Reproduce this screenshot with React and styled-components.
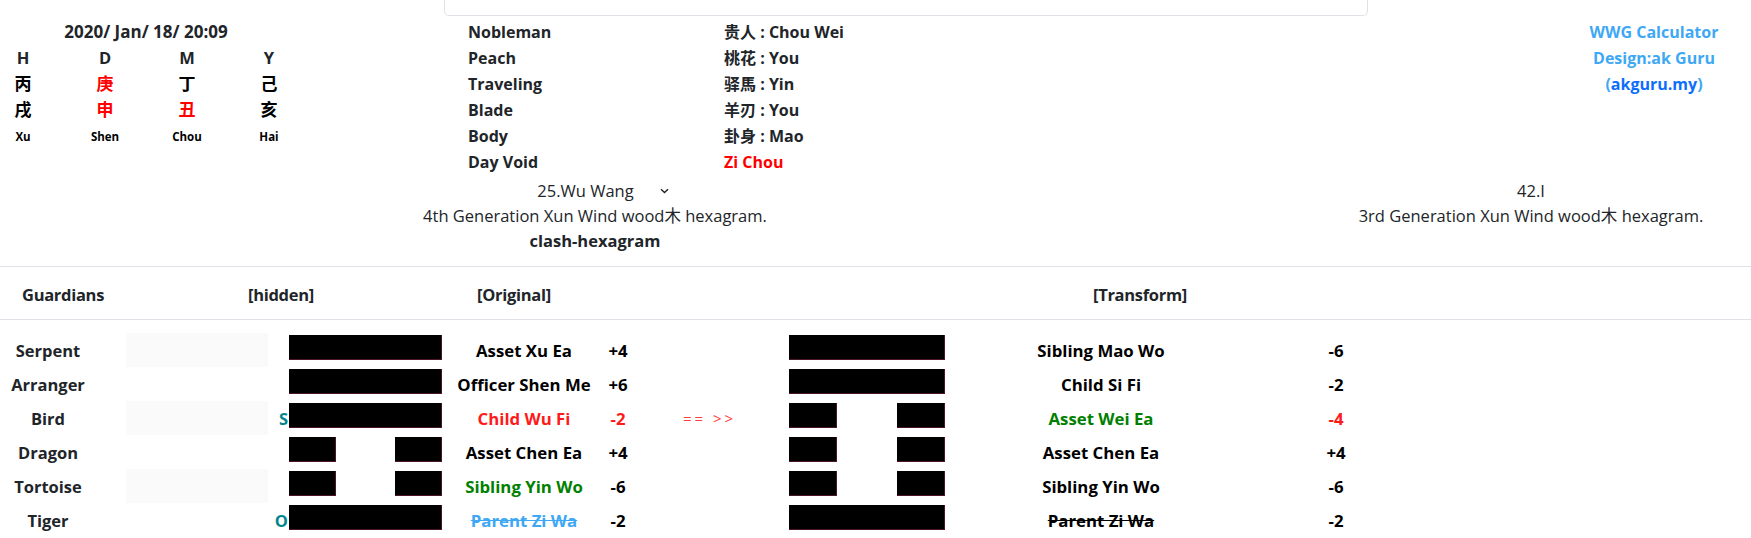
import React from "react";
import styled, { createGlobalStyle } from "styled-components";

const GlobalStyle = createGlobalStyle`
  body {
    margin: 0;
    background: #fff;
    color: #212529;
    font-family: "Open Sans", "Noto Sans CJK SC", sans-serif;
  }
  * {
    box-sizing: border-box;
  }
`;

const Page = styled.div`
  width: 1751px;
`;

const Top = styled.div`
  display: flex;
  align-items: flex-start;
`;

const ChartPanel = styled.div`
  width: 444px;
  padding-top: 19px;
`;

const DateLine = styled.div`
  width: 292px;
  text-align: center;
  font-size: 17px;
  font-weight: 700;
  line-height: 26px;
`;

const PillarGrid = styled.div`
  display: grid;
  grid-template-columns: repeat(4, 46px);
  column-gap: 36px;
  justify-items: center;
`;

const PillarCell = styled.div`
  font-size: ${(p) => p.$size || 16.5}px;
  font-weight: 700;
  line-height: ${(p) => p.$lh || 26}px;
  color: ${(p) => (p.$red ? "#ff0000" : p.$black ? "#000" : "#212529")};
`;

const InfoPanel = styled.div`
  width: 924px;
`;

const CardEdge = styled.div`
  height: 16px;
  border: 1px solid #dee2e6;
  border-top: none;
  border-radius: 0 0 5px 5px;
  margin-bottom: 3px;
`;

const StarGrid = styled.div`
  display: grid;
  grid-template-columns: 256px auto;
  padding-left: 24px;
`;

const StarCell = styled.div`
  font-size: 16px;
  font-weight: 700;
  line-height: 26px;
  color: ${(p) => (p.$red ? "#ff0000" : "#212529")};
`;

const CreditPanel = styled.div`
  flex: 1;
  padding: 19px 0 0 189px;
  text-align: center;
  font-size: 16px;
  font-weight: 700;
  line-height: 26px;
  color: #3ea8f4;
`;

const SiteLink = styled.a`
  color: #0d6efd;
  text-decoration: none;
`;

const HexInfoRow = styled.div`
  display: flex;
  margin-top: 3px;
  padding-bottom: 13px;
  border-bottom: 1px solid #dee2e6;
`;

const HexInfo = styled.div`
  width: ${(p) => p.$width}px;
  margin-left: ${(p) => (p.$right ? "auto" : "0")};
  text-align: center;
  font-size: 16.5px;
  line-height: 25px;
  color: #212529;
`;

const SelectBox = styled.span`
  display: inline-flex;
  align-items: center;
  gap: 26px;
  padding-left: 16px;
`;

const ClashTag = styled.div`
  font-weight: 700;
`;

const TableHead = styled.div`
  display: flex;
  height: 53px;
  align-items: center;
  border-bottom: 1px solid #dee2e6;
  font-size: 16.5px;
  font-weight: 700;
  letter-spacing: -0.3px;
  color: #212529;
`;

const HeadCell = styled.div`
  width: ${(p) => p.$width}px;
  padding-left: ${(p) => p.$pad || 0}px;
  padding-top: 2px;
`;

const TableBody = styled.div`
  padding-top: 13px;
`;

const LineRow = styled.div`
  display: grid;
  grid-template-columns: 96px 30px 142px 21px 153px 164px 24px 159px 156px 312px 158px;
  height: 34px;
  align-items: center;
  font-size: 16.8px;
  font-weight: 700;
  color: #000;
`;

const Centered = styled.div`
  text-align: center;
  white-space: nowrap;
  color: ${(p) => p.$color || "#000"};
  text-decoration: ${(p) => (p.$strike ? "line-through" : "none")};
`;

const GuardianName = styled(Centered)`
  color: #212529;
  font-size: 16.5px;
`;

const HiddenCell = styled.div`
  height: 34px;
  background: ${(p) => (p.$stripe ? "#fafafa" : "transparent")};
`;

const MarkCell = styled.div`
  text-align: right;
  color: #00868b;
  font-size: 16.5px;
  padding-right: 1px;
`;

const BarSlot = styled.div`
  align-self: start;
  margin-top: 2px;
  height: 25px;
  display: flex;
  justify-content: space-between;
`;

const Bar = styled.div`
  width: ${(p) => p.$w};
  height: 25px;
  background: #000;
  border-right: 1px solid #4a1628;
  border-bottom: 1px solid #4a1628;
`;

const Arrow = styled.div`
  text-align: center;
  color: #ff4040;
  font-size: 15px;
  font-weight: 400;
  letter-spacing: 3px;
`;

const Chevron = () => (
  <svg width="9" height="6" viewBox="0 0 9 6">
    <path d="M1 1.2 L4.5 4.6 L8 1.2" fill="none" stroke="#212529" strokeWidth="1.4" />
  </svg>
);

const Line = ({ yang }) => (
  <BarSlot>
    {yang ? (
      <Bar $w="100%" />
    ) : (
      <>
        <Bar $w="31%" />
        <Bar $w="31%" />
      </>
    )}
  </BarSlot>
);

const pillars = [
  { head: "H", stem: "丙", branch: "戌", py: "Xu" },
  { head: "D", stem: "庚", branch: "申", py: "Shen", stemRed: true, branchRed: true },
  { head: "M", stem: "丁", branch: "丑", py: "Chou", branchRed: true },
  { head: "Y", stem: "己", branch: "亥", py: "Hai" },
];

const stars = [
  ["Nobleman", "贵人 : Chou Wei"],
  ["Peach", "桃花 : You"],
  ["Traveling", "驿馬 : Yin"],
  ["Blade", "羊刃 : You"],
  ["Body", "卦身 : Mao"],
  ["Day Void", "Zi Chou", true],
];

const RED = "#ff1a1a";
const GREEN = "#008000";
const SKY = "#3ea8f4";

const rows = [
  {
    guardian: "Serpent", mark: "", yang: true, name: "Asset Xu Ea", num: "+4",
    tYang: true, tName: "Sibling Mao Wo", tNum: "-6",
  },
  {
    guardian: "Arranger", mark: "", yang: true, name: "Officer Shen Me", num: "+6",
    tYang: true, tName: "Child Si Fi", tNum: "-2",
  },
  {
    guardian: "Bird", mark: "S", yang: true, name: "Child Wu Fi", nameColor: RED, num: "-2", numColor: RED,
    arrow: true, tYang: false, tName: "Asset Wei Ea", tNameColor: GREEN, tNum: "-4", tNumColor: RED,
  },
  {
    guardian: "Dragon", mark: "", yang: false, name: "Asset Chen Ea", num: "+4",
    tYang: false, tName: "Asset Chen Ea", tNum: "+4",
  },
  {
    guardian: "Tortoise", mark: "", yang: false, name: "Sibling Yin Wo", nameColor: GREEN, num: "-6",
    tYang: false, tName: "Sibling Yin Wo", tNum: "-6",
  },
  {
    guardian: "Tiger", mark: "O", yang: true, name: "Parent Zi Wa", nameColor: SKY, strike: true, num: "-2",
    tYang: true, tName: "Parent Zi Wa", tStrike: true, tNum: "-2",
  },
];

export default function App() {
  return (
    <Page>
      <GlobalStyle />
      <Top>
        <ChartPanel>
          <DateLine>2020/ Jan/ 18/ 20:09</DateLine>
          <PillarGrid>
            {pillars.map((p) => (
              <PillarCell key={p.head}>{p.head}</PillarCell>
            ))}
            {pillars.map((p) => (
              <PillarCell key={p.stem} $size={17} $black $red={p.stemRed}>
                {p.stem}
              </PillarCell>
            ))}
            {pillars.map((p) => (
              <PillarCell key={p.branch} $size={17} $black $red={p.branchRed}>
                {p.branch}
              </PillarCell>
            ))}
            {pillars.map((p) => (
              <PillarCell key={p.py} $size={11.5} $lh={28} $black>
                {p.py}
              </PillarCell>
            ))}
          </PillarGrid>
        </ChartPanel>
        <InfoPanel>
          <CardEdge />
          <StarGrid>
            {stars.map(([label, value, red]) => (
              <React.Fragment key={label}>
                <StarCell>{label}</StarCell>
                <StarCell $red={red}>{value}</StarCell>
              </React.Fragment>
            ))}
          </StarGrid>
        </InfoPanel>
        <CreditPanel>
          <div>WWG Calculator</div>
          <div>Design:ak Guru</div>
          <div>
            (<SiteLink href="#">akguru.my</SiteLink>)
          </div>
        </CreditPanel>
      </Top>

      <HexInfoRow>
        <HexInfo $width={1190}>
          <SelectBox>
            25.Wu Wang <Chevron />
          </SelectBox>
          <div>4th Generation Xun Wind wood木 hexagram.</div>
          <ClashTag>clash-hexagram</ClashTag>
        </HexInfo>
        <HexInfo $width={440} $right>
          <div>42.I</div>
          <div>3rd Generation Xun Wind wood木 hexagram.</div>
        </HexInfo>
      </HexInfoRow>

      <TableHead>
        <HeadCell $width={248} $pad={22}>Guardians</HeadCell>
        <HeadCell $width={229}>[hidden]</HeadCell>
        <HeadCell $width={616}>[Original]</HeadCell>
        <HeadCell $width={200}>[Transform]</HeadCell>
      </TableHead>

      <TableBody>
        {rows.map((r, i) => (
          <LineRow key={r.guardian}>
            <GuardianName>{r.guardian}</GuardianName>
            <div />
            <HiddenCell $stripe={i % 2 === 0} />
            <MarkCell>{r.mark}</MarkCell>
            <Line yang={r.yang} />
            <Centered $color={r.nameColor} $strike={r.strike}>
              {r.name}
            </Centered>
            <Centered $color={r.numColor}>{r.num}</Centered>
            {r.arrow ? <Arrow>== &gt;&gt;</Arrow> : <div />}
            <Line yang={r.tYang} />
            <Centered $color={r.tNameColor} $strike={r.tStrike}>
              {r.tName}
            </Centered>
            <Centered $color={r.tNumColor}>{r.tNum}</Centered>
          </LineRow>
        ))}
      </TableBody>
    </Page>
  );
}
